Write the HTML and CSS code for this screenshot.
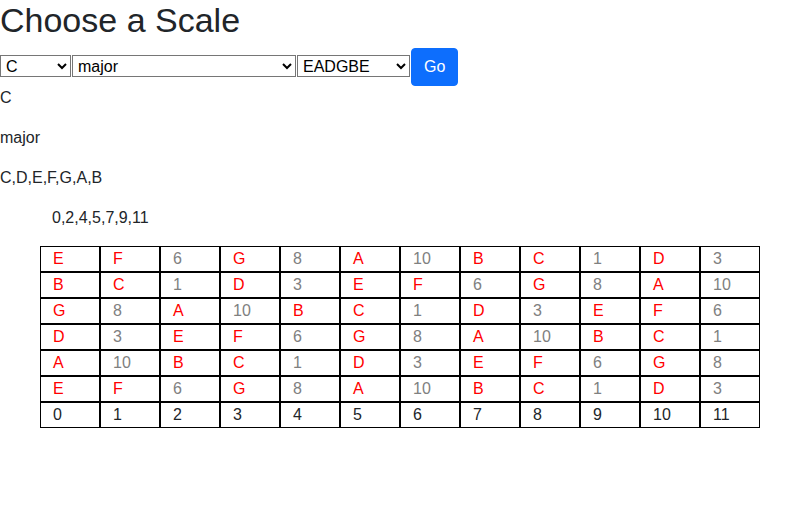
FILE: index.html
```html
<!DOCTYPE html>
<html>
<head>
<meta charset="utf-8">
<link rel="stylesheet" href="styles.css">
</head>
<body>
<h1 class="title">Choose a Scale</h1>
<form class="controls">
  <select class="sel sel-key"><option>C</option></select><select class="sel sel-scale"><option>major</option></select><select class="sel sel-tuning"><option>EADGBE</option></select><button type="button" class="btn-go">Go</button>
</form>
<p class="line">C</p>
<p class="line">major</p>
<p class="line">C,D,E,F,G,A,B</p>
<p class="line intervals">0,2,4,5,7,9,11</p>
<table class="fret">
  <tr><td class="n">E</td><td class="n">F</td><td class="o">6</td><td class="n">G</td><td class="o">8</td><td class="n">A</td><td class="o">10</td><td class="n">B</td><td class="n">C</td><td class="o">1</td><td class="n">D</td><td class="o">3</td></tr>
  <tr><td class="n">B</td><td class="n">C</td><td class="o">1</td><td class="n">D</td><td class="o">3</td><td class="n">E</td><td class="n">F</td><td class="o">6</td><td class="n">G</td><td class="o">8</td><td class="n">A</td><td class="o">10</td></tr>
  <tr><td class="n">G</td><td class="o">8</td><td class="n">A</td><td class="o">10</td><td class="n">B</td><td class="n">C</td><td class="o">1</td><td class="n">D</td><td class="o">3</td><td class="n">E</td><td class="n">F</td><td class="o">6</td></tr>
  <tr><td class="n">D</td><td class="o">3</td><td class="n">E</td><td class="n">F</td><td class="o">6</td><td class="n">G</td><td class="o">8</td><td class="n">A</td><td class="o">10</td><td class="n">B</td><td class="n">C</td><td class="o">1</td></tr>
  <tr><td class="n">A</td><td class="o">10</td><td class="n">B</td><td class="n">C</td><td class="o">1</td><td class="n">D</td><td class="o">3</td><td class="n">E</td><td class="n">F</td><td class="o">6</td><td class="n">G</td><td class="o">8</td></tr>
  <tr><td class="n">E</td><td class="n">F</td><td class="o">6</td><td class="n">G</td><td class="o">8</td><td class="n">A</td><td class="o">10</td><td class="n">B</td><td class="n">C</td><td class="o">1</td><td class="n">D</td><td class="o">3</td></tr>
  <tr><td>0</td><td>1</td><td>2</td><td>3</td><td>4</td><td>5</td><td>6</td><td>7</td><td>8</td><td>9</td><td>10</td><td>11</td></tr>
</table>
</body>
</html>
```

FILE: styles.css
```css
* { box-sizing: border-box; }
body {
  margin: 0;
  font-family: "Liberation Sans", Arial, sans-serif;
  font-size: 16px;
  line-height: 1.5;
  color: #212529;
  background: #fff;
}
.title {
  margin: 0 0 8px 0;
  font-size: 34px;
  font-weight: 500;
  line-height: 40px;
}
.controls {
  display: flex;
  align-items: center;
  margin: 0;
  height: 38px;
}
.sel {
  font-family: inherit;
  font-size: 16px;
  height: 22px;
  margin: -2px 1px 0 0;
  padding: 0 0 0 1px;
  border: 1px solid #767676;
  border-radius: 0;
  background: #fff;
  color: #000;
}
.sel-key { width: 71px; }
.sel-scale { width: 224px; }
.sel-tuning { width: 113px; margin-right: 1px; }
.btn-go {
  font-family: inherit;
  font-size: 16px;
  line-height: 1.5;
  height: 38px;
  width: 47px;
  padding: 6px 12px;
  border: 1px solid #0d6efd;
  border-radius: 4px;
  background: #0d6efd;
  color: #fff;
}
.line {
  margin: 0 0 16px 0;
}
.intervals {
  padding-left: 52px;
}
.fret {
  margin-left: 40px;
  border-collapse: separate;
  border-spacing: 0;
}
.fret td {
  width: 60px;
  height: 26px;
  padding: 0 0 0 12px;
  border: 1px solid #000;
  line-height: 24px;
  color: #212529;
}
.fret td.n { color: #ff0000; }
.fret td.o { color: #808080; }
```
